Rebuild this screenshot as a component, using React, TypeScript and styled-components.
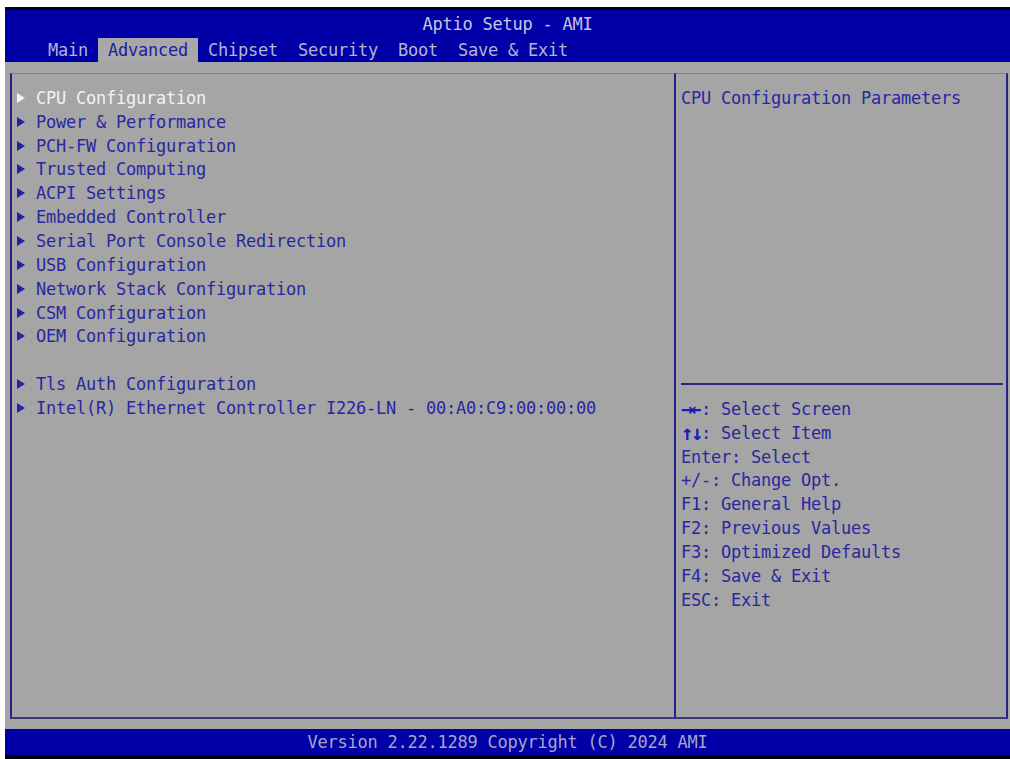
import { FunctionComponent } from 'react';
import styled, { createGlobalStyle } from 'styled-components';

const MENU_ITEMS: (string | null)[] = [
  'CPU Configuration',
  'Power & Performance',
  'PCH-FW Configuration',
  'Trusted Computing',
  'ACPI Settings',
  'Embedded Controller',
  'Serial Port Console Redirection',
  'USB Configuration',
  'Network Stack Configuration',
  'CSM Configuration',
  'OEM Configuration',
  null,
  'Tls Auth Configuration',
  'Intel(R) Ethernet Controller I226-LN - 00:A0:C9:00:00:00',
];

const TABS = ['Main', 'Advanced', 'Chipset', 'Security', 'Boot', 'Save & Exit'];

const KEYS: [string, string, boolean][] = [
  ['→←', 'Select Screen', true],
  ['↑↓', 'Select Item', true],
  ['Enter', 'Select', false],
  ['+/-', 'Change Opt.', false],
  ['F1', 'General Help', false],
  ['F2', 'Previous Values', false],
  ['F3', 'Optimized Defaults', false],
  ['F4', 'Save & Exit', false],
  ['ESC', 'Exit', false],
];

const GlobalStyle = createGlobalStyle`
  html, body {
    margin: 0;
    padding: 0;
    background: #ffffff;
  }
  body {
    font-family: "DejaVu Sans Mono", "Liberation Mono", monospace;
    font-size: 17px;
    letter-spacing: -0.235px;
  }
`;

const Screen = styled.div`
  width: 1005px;
  height: 752px;
  margin: 7px 0 0 5px;
  display: flex;
  flex-direction: column;
  background: #a5a5a5;
`;

const Header = styled.header`
  height: 55px;
  box-sizing: border-box;
  border-top: 3px solid #00001a;
  background: #0000a6;
  display: flex;
  flex-direction: column;
`;

const Title = styled.div`
  height: 28px;
  display: flex;
  align-items: center;
  justify-content: center;
  color: #c6c6dc;
`;

const TabBar = styled.nav`
  height: 24px;
  display: flex;
  padding-left: 33px;
`;

const Tab = styled.div<{ $active?: boolean }>`
  padding: 0 10px;
  line-height: 24px;
  white-space: pre;
  background: ${p => (p.$active ? '#a8a8a8' : 'transparent')};
  color: ${p => (p.$active ? '#1c1ca2' : '#b4b4d6')};
`;

const Body = styled.main`
  flex: 1;
  display: flex;
  padding: 11px 2px 10px 5px;
`;

const LeftPanel = styled.section`
  width: 666px;
  box-sizing: border-box;
  border-top: 1px solid #7e7e8e;
  border-left: 2px solid #23238a;
  border-right: 2px solid #23238a;
  border-bottom: 2px solid #3a3a78;
  padding: 12px 0 0 5px;
`;

const RightPanel = styled.aside`
  flex: 1;
  display: flex;
  flex-direction: column;
  box-sizing: border-box;
  border-top: 1px solid #7e7e8e;
  border-right: 2px solid #23238a;
  border-bottom: 2px solid #3a3a78;
`;

const Row = styled.div<{ $selected?: boolean }>`
  height: 23.85px;
  display: flex;
  align-items: center;
  white-space: pre;
  color: ${p => (p.$selected ? '#f2f2f2' : '#2828a0')};
`;

const Arrow = styled.span<{ $selected?: boolean }>`
  width: 0;
  height: 0;
  border-top: 5px solid transparent;
  border-bottom: 5px solid transparent;
  border-left: 8px solid ${p => (p.$selected ? '#f4f4f4' : '#2222a6')};
  margin-right: 11px;
`;

const HelpArea = styled.div`
  height: 309px;
  box-sizing: border-box;
  padding: 12px 5px 0 5px;
`;

const Divider = styled.hr`
  margin: 0 3px 0 5px;
  border: none;
  height: 2px;
  background: #2a2a7c;
`;

const KeyList = styled.div`
  padding: 12px 5px 0 5px;
`;

const KeyGlyph = styled.span<{ $arrow?: boolean }>`
  display: inline-block;
  color: ${p => (p.$arrow ? '#1a1ac0' : 'inherit')};
  font-weight: ${p => (p.$arrow ? 'bold' : 'normal')};
  font-size: ${p => (p.$arrow ? '21px' : 'inherit')};
  letter-spacing: ${p => (p.$arrow ? '-2.64px' : 'inherit')};
  width: ${p => (p.$arrow ? '20px' : 'auto')};
  overflow: hidden;
`;

const Footer = styled.footer`
  height: 30px;
  box-sizing: border-box;
  border-bottom: 4px solid #00000c;
  background: #0000a6;
  display: flex;
  align-items: center;
  justify-content: center;
  color: #a6a6c8;
`;

const App: FunctionComponent = () => {
  return (
    <>
      <GlobalStyle />
      <Screen>
        <Header>
          <Title>Aptio Setup - AMI</Title>
          <TabBar>
            {TABS.map(tab => (
              <Tab key={tab} $active={tab === 'Advanced'}>{tab}</Tab>
            ))}
          </TabBar>
        </Header>
        <Body>
          <LeftPanel>
            {MENU_ITEMS.map((item, i) =>
              item === null ? (
                <Row key={i} />
              ) : (
                <Row key={i} $selected={i === 0}>
                  <Arrow $selected={i === 0} />
                  {item}
                </Row>
              )
            )}
          </LeftPanel>
          <RightPanel>
            <HelpArea>
              <Row>CPU Configuration Parameters</Row>
            </HelpArea>
            <Divider />
            <KeyList>
              {KEYS.map(([key, label, arrow]) => (
                <Row key={key}>
                  <KeyGlyph $arrow={arrow}>{key}</KeyGlyph>
                  : {label}
                </Row>
              ))}
            </KeyList>
          </RightPanel>
        </Body>
        <Footer>Version 2.22.1289 Copyright (C) 2024 AMI</Footer>
      </Screen>
    </>
  );
};

export default App;
